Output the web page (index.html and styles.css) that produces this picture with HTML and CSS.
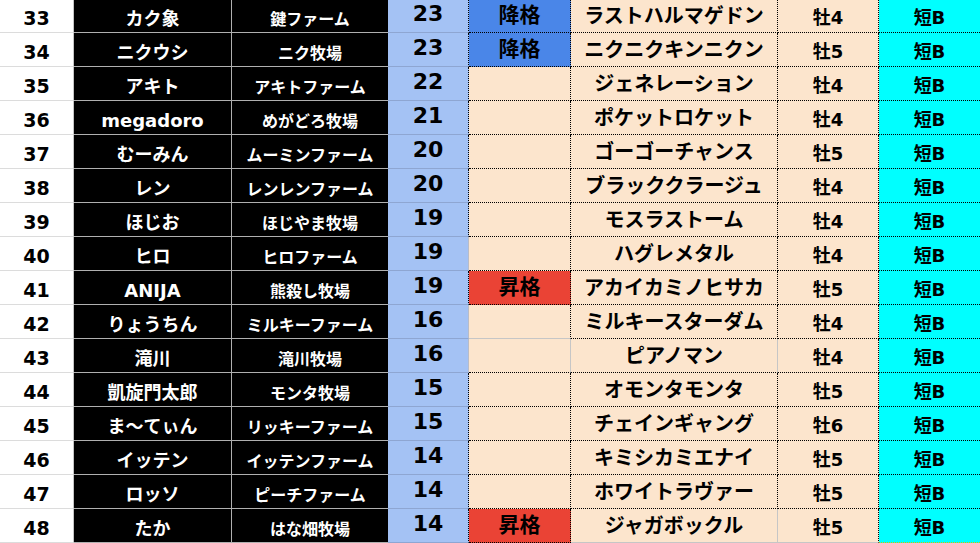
FILE: index.html
```html
<!DOCTYPE html>
<html lang="ja">
<head>
<meta charset="utf-8">
<title>ランキング</title>
<link rel="stylesheet" href="styles.css">
</head>
<body>
<div class="sheet">
  <div class="row">
    <div class="c rank">33</div><div class="c name">カク象</div><div class="c farm">鍵ファーム</div>
    <div class="c pts dr">23</div><div class="c badge down dr db">降格</div><div class="c horse dr db">ラストハルマゲドン</div><div class="c sex dr db">牡4</div><div class="c cls db">短B</div>
  </div>
  <div class="row">
    <div class="c rank">34</div><div class="c name">ニクウシ</div><div class="c farm">ニク牧場</div>
    <div class="c pts dr">23</div><div class="c badge down dr db">降格</div><div class="c horse dr db">ニクニクキンニクン</div><div class="c sex dr db">牡5</div><div class="c cls db">短B</div>
  </div>
  <div class="row">
    <div class="c rank">35</div><div class="c name">アキト</div><div class="c farm">アキトファーム</div>
    <div class="c pts dr">22</div><div class="c badge dr db"></div><div class="c horse dr db">ジェネレーション</div><div class="c sex dr db">牡4</div><div class="c cls db">短B</div>
  </div>
  <div class="row">
    <div class="c rank">36</div><div class="c name">megadoro</div><div class="c farm">めがどろ牧場</div>
    <div class="c pts dr">21</div><div class="c badge dr db"></div><div class="c horse dr db">ポケットロケット</div><div class="c sex dr db">牡4</div><div class="c cls db">短B</div>
  </div>
  <div class="row">
    <div class="c rank">37</div><div class="c name">むーみん</div><div class="c farm">ムーミンファーム</div>
    <div class="c pts dr">20</div><div class="c badge dr db"></div><div class="c horse dr db">ゴーゴーチャンス</div><div class="c sex dr db">牡5</div><div class="c cls db">短B</div>
  </div>
  <div class="row">
    <div class="c rank">38</div><div class="c name">レン</div><div class="c farm">レンレンファーム</div>
    <div class="c pts dr">20</div><div class="c badge dr db"></div><div class="c horse dr db">ブラッククラージュ</div><div class="c sex dr db">牡4</div><div class="c cls db">短B</div>
  </div>
  <div class="row">
    <div class="c rank">39</div><div class="c name">ほじお</div><div class="c farm">ほじやま牧場</div>
    <div class="c pts dr">19</div><div class="c badge dr db"></div><div class="c horse dr db">モスラストーム</div><div class="c sex dr db">牡4</div><div class="c cls db">短B</div>
  </div>
  <div class="row">
    <div class="c rank">40</div><div class="c name">ヒロ</div><div class="c farm">ヒロファーム</div>
    <div class="c pts">19</div><div class="c badge dr db"></div><div class="c horse dr db">ハグレメタル</div><div class="c sex dr db">牡4</div><div class="c cls db">短B</div>
  </div>
  <div class="row">
    <div class="c rank">41</div><div class="c name">ANIJA</div><div class="c farm">熊殺し牧場</div>
    <div class="c pts dr">19</div><div class="c badge up dr db">昇格</div><div class="c horse dr db">アカイカミノヒサカ</div><div class="c sex dr db">牡5</div><div class="c cls db">短B</div>
  </div>
  <div class="row">
    <div class="c rank">42</div><div class="c name">りょうちん</div><div class="c farm">ミルキーファーム</div>
    <div class="c pts">16</div><div class="c badge dr"></div><div class="c horse dr db">ミルキースターダム</div><div class="c sex dr db">牡4</div><div class="c cls db">短B</div>
  </div>
  <div class="row">
    <div class="c rank">43</div><div class="c name">滝川</div><div class="c farm">滝川牧場</div>
    <div class="c pts">16</div><div class="c badge db"></div><div class="c horse db">ピアノマン</div><div class="c sex dr db">牡4</div><div class="c cls db">短B</div>
  </div>
  <div class="row">
    <div class="c rank">44</div><div class="c name">凱旋門太郎</div><div class="c farm">モンタ牧場</div>
    <div class="c pts dr">15</div><div class="c badge dr db"></div><div class="c horse dr db">オモンタモンタ</div><div class="c sex dr db">牡5</div><div class="c cls db">短B</div>
  </div>
  <div class="row">
    <div class="c rank">45</div><div class="c name">ま〜てぃん</div><div class="c farm">リッキーファーム</div>
    <div class="c pts dr">15</div><div class="c badge dr db"></div><div class="c horse dr db">チェインギャング</div><div class="c sex dr db">牡6</div><div class="c cls db">短B</div>
  </div>
  <div class="row">
    <div class="c rank">46</div><div class="c name">イッテン</div><div class="c farm">イッテンファーム</div>
    <div class="c pts dr">14</div><div class="c badge dr db"></div><div class="c horse dr db">キミシカミエナイ</div><div class="c sex dr db">牡5</div><div class="c cls db">短B</div>
  </div>
  <div class="row">
    <div class="c rank">47</div><div class="c name">ロッソ</div><div class="c farm">ピーチファーム</div>
    <div class="c pts dr">14</div><div class="c badge dr db"></div><div class="c horse dr db">ホワイトラヴァー</div><div class="c sex dr db">牡5</div><div class="c cls db">短B</div>
  </div>
  <div class="row">
    <div class="c rank">48</div><div class="c name">たか</div><div class="c farm">はな畑牧場</div>
    <div class="c pts dr">14</div><div class="c badge up dr db">昇格</div><div class="c horse">ジャガボックル</div><div class="c sex dr">牡5</div><div class="c cls db last">短B</div>
  </div>
</div>
</body>
</html>
```

FILE: styles.css
```css
html, body {
  margin: 0;
  padding: 0;
  background: #ffffff;
}

body {
  width: 980px;
  height: 543px;
  overflow: hidden;
  font-family: "DejaVu Sans", "Noto Sans CJK JP", sans-serif;
  font-weight: bold;
  color: #000;
}

.sheet {
  margin-top: -1px;
  display: flex;
  flex-direction: column;
}

.row {
  display: grid;
  grid-template-columns: 74px 158px 156px 81px 102px 207px 101px 101px;
  height: 34px;
}

.c {
  box-sizing: border-box;
  height: 34px;
  display: flex;
  align-items: center;
  justify-content: center;
  white-space: nowrap;
  border-right: 1px solid #c6c6c6;
  border-bottom: 1px solid #c6c6c6;
  line-height: 1;
}

.rank {
  background: #ffffff;
  font-size: 19px;
  padding-top: 6px;
  border-right-color: #c4c4c4;
  border-bottom-color: #dcdcdc;
}

.name {
  background: #000;
  color: #fff;
  font-size: 18px;
  padding-top: 7px;
  border-right-color: #b0b0b0;
  border-bottom-color: #b0b0b0;
}

.farm {
  background: #000;
  color: #fff;
  font-size: 16px;
  padding-top: 9px;
  border-right: none;
  border-bottom-color: #b0b0b0;
}

.pts {
  background: #a4c2f4;
  font-size: 22px;
  padding-bottom: 3px;
  border-right-color: #b8bcc8;
  border-bottom-color: #8ea6d2;
}

.badge {
  background: #fce5cd;
  font-size: 21px;
  padding-bottom: 1px;
}

.badge.down {
  background: #4a86e8;
}

.badge.up {
  background: #ea4335;
}

.horse {
  background: #fce5cd;
  font-size: 20px;
  padding-top: 1px;
}

.sex {
  background: #fce5cd;
  font-size: 18px;
  padding-top: 5px;
}

.cls {
  background: #00ffff;
  font-size: 18px;
  padding-top: 5px;
  border-right: none;
}

.cls.last {
  border-bottom-color: #c9c400;
}

.dr {
  border-right: 1px dotted #000;
}

.db {
  border-bottom: 1px dotted #000;
}
```
